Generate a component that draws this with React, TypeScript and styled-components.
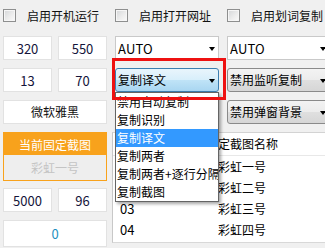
import React from "react";
import styled, { createGlobalStyle, css } from "styled-components";

const GlobalStyle = createGlobalStyle`
  html, body { margin: 0; padding: 0; background: #f0f0f0; }
  body { font-family: "Noto Sans CJK SC", "Noto Sans", sans-serif; }
  * { box-sizing: border-box; }
`;

const FONT = `"Noto Sans CJK SC", "Noto Sans", sans-serif`;

const Window = styled.div`
  width: 325px;
  height: 248px;
  overflow: hidden;
  background: #f0f0f0;
  padding: 9px 0 0 3px;
  font-family: ${FONT};
  color: #000;
  position: relative;
`;

const CheckRow = styled.div`
  display: grid;
  grid-template-columns: 104px 104px 103px;
  column-gap: 8px;
  height: 13px;
  margin-bottom: 14px;
  width: 330px;
`;

const CheckItem = styled.label`
  display: flex;
  align-items: center;
  gap: 11px;
  font-size: 12px;
  line-height: 13px;
  color: #111;
  white-space: nowrap;
`;

const CheckBox = styled.span`
  flex: none;
  width: 13px;
  height: 13px;
  border: 1px solid #8e8f8f;
  background: linear-gradient(135deg, #d4d6d8 0%, #eeeeee 60%, #fafafa 100%);
  box-shadow: inset 0 0 0 1px #f6f6f6;
`;

const Grid = styled.div`
  display: grid;
  grid-template-columns: 104px 104px 103px;
  grid-template-rows: 24px 24px 24px auto;
  column-gap: 8px;
  row-gap: 8px;
  width: 330px;
`;

const Pair = styled.div`
  display: grid;
  grid-template-columns: 49px 49px;
  column-gap: 6px;
`;

const ValueBox = styled.div<{ $tone?: "dark" | "teal"; $h?: number }>`
  height: ${(p) => p.$h ?? 24}px;
  background: #fff;
  border: 1px solid #e2e2e2;
  display: flex;
  align-items: center;
  justify-content: center;
  font-size: 13px;
  line-height: 1;
  color: ${(p) => (p.$tone === "teal" ? "#1f8fc0" : "#14143a")};
`;

const FontBox = styled(ValueBox)`
  font-size: 12px;
  color: #111;
`;

const comboVariants = {
  white: css`
    background: #fff;
    border: 1px solid #c9c9c9;
    border-radius: 0;
  `,
  gray: css`
    background: linear-gradient(#f3f3f3 0%, #ececec 48%, #dfdfdf 52%, #d6d6d6 100%);
    border: 1px solid #8a8a8a;
    border-radius: 3px;
  `,
  hot: css`
    background: linear-gradient(#e9f5fc 0%, #d8effb 48%, #bfe3f7 52%, #a9d6f1 100%);
    border: 1px solid #3c7fb1;
    border-radius: 3px;
  `,
};

const Combo = styled.div<{ $variant: "white" | "gray" | "hot" }>`
  position: relative;
  height: 24px;
  display: flex;
  align-items: center;
  padding-left: 2px;
  font-size: 12px;
  line-height: 1;
  color: #000;
  white-space: nowrap;
  ${(p) => comboVariants[p.$variant]}
`;

const ComboLatin = styled.span`
  font-size: 13px;
  letter-spacing: 0.2px;
`;

const Arrow = styled.span`
  position: absolute;
  right: 3px;
  top: 10px;
  width: 0;
  height: 0;
  border-left: 3.5px solid transparent;
  border-right: 3.5px solid transparent;
  border-top: 4px solid #000;
`;

const Anchor = styled.div`
  position: relative;
`;

const Popup = styled.ul`
  position: absolute;
  z-index: 10;
  top: 100%;
  left: 0;
  width: 104px;
  margin: 0;
  padding: 0;
  list-style: none;
  background: #fff;
  border: 1px solid #646464;
  box-shadow: 2px 2px 3px rgba(0, 0, 0, 0.35);
  overflow: hidden;
`;

const PopupItem = styled.li<{ $active?: boolean }>`
  height: 18px;
  display: flex;
  align-items: center;
  padding-left: 1px;
  font-size: 12px;
  line-height: 1;
  white-space: nowrap;
  background: ${(p) => (p.$active ? "#3399ff" : "transparent")};
  color: ${(p) => (p.$active ? "#fff" : "#000")};
`;

const RedMark = styled.div`
  position: absolute;
  z-index: 20;
  top: -10px;
  left: -3px;
  right: -7px;
  bottom: -8px;
  border: 3px solid #ee1111;
  pointer-events: none;
`;

const LeftStack = styled.div`
  display: flex;
  flex-direction: column;
`;

const Group = styled.div`
  display: flex;
  flex-direction: column;
  border: 1px solid #f8a21c;
  margin-bottom: 7px;
`;

const GroupTitle = styled.div`
  height: 22px;
  background: #f8a21c;
  color: #fff;
  font-size: 12px;
  display: flex;
  align-items: center;
  justify-content: center;
`;

const GroupBody = styled.div`
  height: 25px;
  background: #eeeeee;
  color: #c4c4c4;
  font-size: 12px;
  display: flex;
  align-items: center;
  justify-content: center;
`;

const Spacer = styled.div<{ $h: number }>`
  height: ${(p) => p.$h}px;
`;

const Table = styled.div`
  grid-column: 2 / 4;
  margin-left: -3px;
  height: 111px;
  background: #fff;
  border-top: 1px solid #d3d3d3;
  border-left: 1px solid #c8c8c8;
  border-bottom: 1px solid #d8d8d8;
  display: flex;
  flex-direction: column;
`;

const Row = styled.div<{ $cols: string; $h: number }>`
  display: grid;
  grid-template-columns: ${(p) => p.$cols};
  height: ${(p) => p.$h}px;
  align-items: center;
`;

const HeaderRow = styled(Row)`
  border-bottom: 1px solid #e8e8e8;
`;

const Cell = styled.div<{ $num?: boolean }>`
  padding-left: ${(p) => (p.$num ? 7 : 0)}px;
  font-size: ${(p) => (p.$num ? 13 : 12)}px;
  line-height: 1;
  white-space: nowrap;
  color: #000;
`;

const checks = ["启用开机运行", "启用打开网址", "启用划词复制"];
const popupItems = ["禁用自动复制", "复制识别", "复制译文", "复制两者", "复制两者+逐行分隔", "复制截图"];
// numbers of the first two rows lie under the open drop-down list and are not visible
const rows = [
  ["", "彩虹一号"],
  ["", "彩虹二号"],
  ["03", "彩虹三号"],
  ["04", "彩虹四号"],
];

export default function App() {
  return (
    <>
      <GlobalStyle />
      <Window>
        <CheckRow>
          {checks.map((c) => (
            <CheckItem key={c}>
              <CheckBox />
              {c}
            </CheckItem>
          ))}
        </CheckRow>
        <Grid>
          <Pair>
            <ValueBox>320</ValueBox>
            <ValueBox>550</ValueBox>
          </Pair>
          <Combo $variant="white">
            <ComboLatin>AUTO</ComboLatin>
            <Arrow />
          </Combo>
          <Combo $variant="white">
            <ComboLatin>AUTO</ComboLatin>
            <Arrow />
          </Combo>

          <Pair>
            <ValueBox>13</ValueBox>
            <ValueBox>70</ValueBox>
          </Pair>
          <Anchor>
            <Combo $variant="hot">
              复制译文
              <Arrow />
            </Combo>
            <Popup>
              {popupItems.map((it) => (
                <PopupItem key={it} $active={it === "复制译文"}>
                  {it}
                </PopupItem>
              ))}
            </Popup>
            <RedMark />
          </Anchor>
          <Combo $variant="gray">
            禁用监听复制
            <Arrow />
          </Combo>

          <FontBox>微软雅黑</FontBox>
          <div />
          <Combo $variant="gray">
            禁用弹窗背景
            <Arrow />
          </Combo>

          <LeftStack>
            <Group>
              <GroupTitle>当前固定截图</GroupTitle>
              <GroupBody>彩虹一号</GroupBody>
            </Group>
            <Pair>
              <ValueBox>5000</ValueBox>
              <ValueBox>96</ValueBox>
            </Pair>
            <Spacer $h={8} />
            <ValueBox $tone="teal" $h={27}>0</ValueBox>
          </LeftStack>
          <Table>
            <HeaderRow $cols="93px 1fr" $h={23}>
              <Cell />
              <Cell>固定截图名称</Cell>
            </HeaderRow>
            {rows.map(([n, name]) => (
              <Row key={name} $cols="105px 1fr" $h={21}>
                <Cell $num>{n}</Cell>
                <Cell>{name}</Cell>
              </Row>
            ))}
          </Table>
        </Grid>
      </Window>
    </>
  );
}
